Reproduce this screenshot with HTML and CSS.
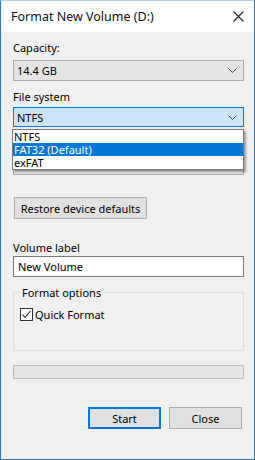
FILE: index.html
```html
<!DOCTYPE html>
<html lang="en">
<head>
  <meta charset="UTF-8">
  <meta name="viewport" content="width=device-width, initial-scale=1.0">
  <title>Format New Volume (D:)</title>
  <link rel="stylesheet" href="styles.css">
</head>
<body>

  <div id="Janela" class="Janela">
    <div class="JanelaTitulo">
      <span class="JanelaTituloTexto">Format New Volume (D:)</span>
      <svg class="JanelaFechar" width="11" height="11" viewBox="0 0 11 11">
        <path d="M0.5 0.5 L10.5 10.5 M10.5 0.5 L0.5 10.5" stroke="#222" stroke-width="1.1" fill="none"/>
      </svg>
    </div>

    <div class="JanelaConteudo">
      <div class="Rotulo RotuloCapacidade">Capacity:</div>
      <div class="Combo">
        <span>14.4 GB</span>
        <svg class="ComboSeta" width="9" height="5" viewBox="0 0 9 5"><path d="M0.5 0.5 L4.5 4.5 L8.5 0.5" stroke="#444" fill="none"/></svg>
      </div>

      <div class="Rotulo RotuloSistema">File system</div>
      <div class="ComboAberto">
        <div class="Combo Combo-foco">
          <span>NTFS</span>
          <svg class="ComboSeta" width="9" height="5" viewBox="0 0 9 5"><path d="M0.5 0.5 L4.5 4.5 L8.5 0.5" stroke="#444" fill="none"/></svg>
        </div>
        <ul class="Lista">
          <li class="ListaItem">NTFS</li>
          <li class="ListaItem ListaItem-selecionado">FAT32 (Default)</li>
          <li class="ListaItem">exFAT</li>
        </ul>
      </div>

      <!-- coberto pela lista aberta -->
      <div class="Rotulo RotuloAlocacao"></div>
      <div class="Combo Combo-coberto"></div>

      <button class="Botao BotaoRestaurar">Restore device defaults</button>

      <div class="Rotulo RotuloVolume">Volume label</div>
      <div class="Campo">New Volume</div>

      <fieldset class="Grupo">
        <legend class="GrupoTitulo">Format options</legend>
        <label class="Marcar">
          <svg width="13" height="13" viewBox="0 0 13 13">
            <rect x="0.5" y="0.5" width="12" height="12" fill="#fff" stroke="#333"/>
            <path d="M2.5 6.5 L5 9.5 L10.5 3" stroke="#222" stroke-width="1.1" fill="none"/>
          </svg>
          <span>Quick Format</span>
        </label>
      </fieldset>

      <div class="Progresso"></div>

      <div class="Botoes">
        <button class="Botao BotaoPadrao">Start</button>
        <button class="Botao">Close</button>
      </div>
    </div>
  </div>

</body>
</html>
```

FILE: styles.css
```css
html, body {
  margin: 0;
  padding: 0;
  background-color: #fff;
}
body {
  font-family: "Noto Sans", "Open Sans", sans-serif;
  font-size: 11px;
  color: #000;
}
.Janela {
  width: 255px;
  height: 460px;
  box-sizing: border-box;
  border: 1px solid #2f7bc0;
  border-top-color: #b9cde2;
  display: flex;
  flex-direction: column;
  background-color: #f0f0f0;
}
.JanelaTitulo {
  height: 31px;
  background-color: #fff;
  display: flex;
  align-items: center;
  justify-content: space-between;
  padding: 0 10px 0 10px;
  flex-shrink: 0;
}
.JanelaTituloTexto {
  font-size: 12.5px;
  color: #111;
  margin-top: -1px;
}
.JanelaFechar {
  margin-top: -1px;
}
.JanelaConteudo {
  flex: 1;
  padding: 0 10px 0 12px;
  display: flex;
  flex-direction: column;
}
.Rotulo {
  height: 15px;
  line-height: 15px;
}
.RotuloCapacidade {
  margin-top: 8px;
  margin-bottom: 5px;
}
.RotuloSistema {
  margin-top: 8px;
  margin-bottom: 3px;
}
.RotuloAlocacao {
  margin-top: 8px;
  margin-bottom: 4px;
}
.RotuloVolume {
  margin-top: 21px;
  margin-bottom: 1px;
}
.Combo {
  height: 21px;
  box-sizing: border-box;
  border: 1px solid #adadad;
  background-color: #e5e5e5;
  display: flex;
  align-items: center;
  justify-content: space-between;
  padding: 0 6px 0 3px;
}
.Combo-foco {
  height: 20px;
  border-color: #0078d7;
  background-color: #cce4f7;
}
.ComboAberto {
  position: relative;
}
.Lista {
  position: absolute;
  top: 22px;
  left: -1px;
  width: 232px;
  box-sizing: border-box;
  margin: 0;
  padding: 0;
  list-style: none;
  background-color: #fff;
  border: 1px solid #7a7a7a;
  box-shadow: 2px 2px 2px rgba(0, 0, 0, 0.35);
  z-index: 2;
}
.ListaItem {
  height: 13px;
  line-height: 13px;
  padding-left: 1px;
  overflow: hidden;
}
.ListaItem-selecionado {
  background-color: #0078d7;
  color: #fff;
}
.Botao {
  font-family: inherit;
  font-size: 11px;
  color: #000;
  height: 22px;
  box-sizing: border-box;
  border: 1px solid #adadad;
  background-color: #e1e1e1;
  padding: 0;
}
.BotaoRestaurar {
  margin-top: 22px;
  width: 133px;
  margin-left: 1px;
}
.Campo {
  height: 21px;
  box-sizing: border-box;
  border: 1px solid #7a7a7a;
  background-color: #fff;
  line-height: 19px;
  padding-left: 4px;
}
.Grupo {
  margin: 8px 0 0 0;
  padding: 7px 6px 0 6px;
  height: 66px;
  box-sizing: border-box;
  border: 1px solid #dcdcdc;
}
.GrupoTitulo {
  padding: 0 2px;
  margin-left: 0;
  line-height: 15px;
}
.Marcar {
  display: flex;
  align-items: center;
  gap: 2px;
}
.Progresso {
  margin-top: 14px;
  height: 14px;
  box-sizing: border-box;
  border: 1px solid #bcbcbc;
  background-color: #e6e6e6;
}
.Botoes {
  margin-top: 28px;
  display: flex;
  justify-content: flex-end;
  gap: 8px;
  padding-right: 2px;
}
.Botoes .Botao {
  width: 73px;
  height: 22px;
}
.BotaoPadrao {
  border: 2px solid #0078d7;
  height: 23px;
}
```
